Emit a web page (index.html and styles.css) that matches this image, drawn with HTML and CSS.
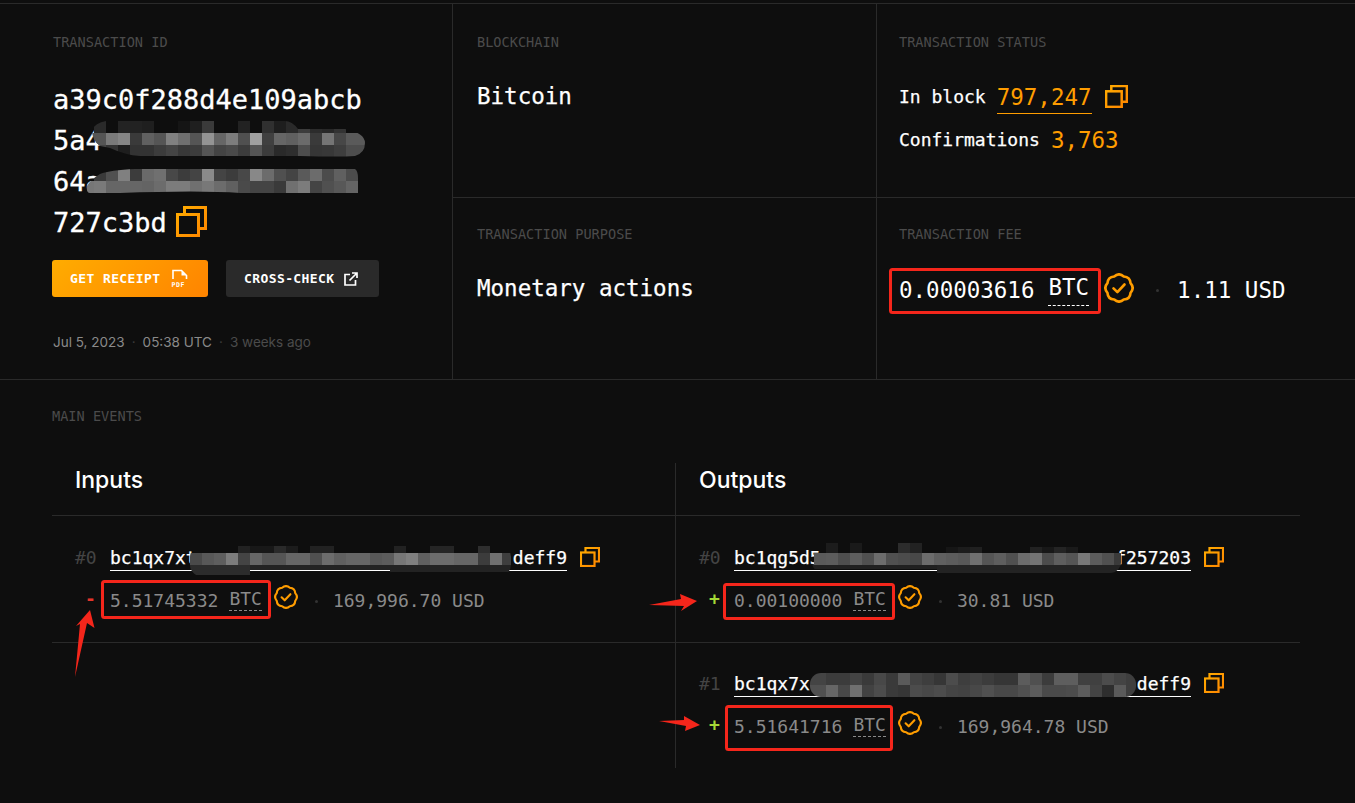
FILE: index.html
```html
<!DOCTYPE html>
<html lang="en">
<head>
<meta charset="utf-8">
<title>Transaction</title>
<link rel="stylesheet" href="styles.css">
</head>
<body>
<svg class="defs" width="0" height="0" aria-hidden="true">
  <defs>
    <linearGradient id="orange" x1="0" y1="0" x2="1" y2="1">
      <stop offset="0" stop-color="#ffa800"/>
      <stop offset="1" stop-color="#ff8a00"/>
    </linearGradient>
    <symbol id="copy" viewBox="0 0 31 31">
      <rect x="1.5" y="8.5" width="21" height="21" fill="none" stroke="url(#orange)"/>
      <path d="M8.5 8.5V1.5H29.5V22.5H22.5" fill="none" stroke="url(#orange)"/>
    </symbol>
    <symbol id="badge" viewBox="0 0 24 24">
      <path d="M8.17 2.76Q12 -0.6 15.83 2.76Q20.9 3.1 21.24 8.17Q24.6 12 21.24 15.83Q20.9 20.9 15.83 21.24Q12 24.6 8.17 21.24Q3.1 20.9 2.76 15.83Q-0.6 12 2.76 8.17Q3.1 3.1 8.17 2.76Z" fill="none" stroke="#ff9d00" stroke-width="2.1" stroke-linejoin="round"/>
      <path d="M7.6 12.3l3.1 3 5.7-6.100" fill="none" stroke="#ff9d00" stroke-width="2.1" stroke-linecap="round" stroke-linejoin="round"/>
    </symbol>
  </defs>
</svg>

<main class="page">
  <section class="summary">
    <div class="cell cell-id">
      <div class="label">TRANSACTION ID</div>
      <div class="hash">
        <div class="hash-line">a39c0f288d4e109abcb</div>
        <div class="hash-line">5a4</div>
        <div class="hash-line">64a</div>
        <div class="hash-line">727c3bd<svg class="icon-copy-lg"><use href="#copy"/></svg></div>
      </div>
      <div class="actions">
        <a class="btn btn-primary">GET RECEIPT
          <svg class="icon-pdf" viewBox="0 0 18 19">
            <path d="M2 10V1.5H10.5L15.5 6.5V10" fill="none" stroke="#fff" stroke-width="1.6"/>
            <path d="M10.5 2V6.5H15Z" fill="#fff"/>
            <text x="0.5" y="18" class="pdf-text">PDF</text>
          </svg>
        </a>
        <a class="btn btn-dark">CROSS-CHECK
          <svg class="icon-ext" viewBox="0 0 14 14">
            <path d="M6 2.500H1V13H11.500V8" fill="none" stroke="#fff" stroke-width="1.7"/>
            <path d="M8 1h5v5M13 1 5.500 8.500" fill="none" stroke="#fff" stroke-width="1.7"/>
          </svg>
        </a>
      </div>
      <div class="date">
        <span>Jul 5, 2023</span><i class="sep">·</i><span>05:38 UTC</span><i class="sep">·</i><span class="ago">3 weeks ago</span>
      </div>
    </div>

    <div class="cell cell-top cell-mid">
      <div class="label">BLOCKCHAIN</div>
      <div class="value">Bitcoin</div>
    </div>
    <div class="cell cell-top">
      <div class="label">TRANSACTION STATUS</div>
      <div class="status-row status-first">
        <span class="status-key">In block</span>
        <a class="status-num linked">797,247</a>
        <svg class="icon-copy-md"><use href="#copy"/></svg>
      </div>
      <div class="status-row status-second">
        <span class="status-key">Confirmations</span>
        <span class="status-num">3,763</span>
      </div>
    </div>
    <div class="cell cell-bottom cell-mid">
      <div class="label">TRANSACTION PURPOSE</div>
      <div class="value">Monetary actions</div>
    </div>
    <div class="cell cell-bottom">
      <div class="label">TRANSACTION FEE</div>
      <div class="fee">
        <span>0.00003616</span>
        <span class="unit">BTC</span>
        <svg class="icon-badge-lg"><use href="#badge"/></svg>
        <i class="dot dot-lg"></i>
        <span>1.11 USD</span>
      </div>
    </div>
  </section>

  <section class="events">
    <div class="label">MAIN EVENTS</div>
    <div class="events-grid">
      <div class="col-head">Inputs</div>
      <div class="col-head col-right">Outputs</div>

      <div class="io io-first">
        <div class="addr-row">
          <span class="index">#0</span>
          <a class="addr"><span>bc1qx7xt</span><span>deff9</span></a>
          <svg class="icon-copy-sm"><use href="#copy"/></svg>
        </div>
        <div class="amount-row">
          <span class="sign sign-minus">-</span>
          <span>5.51745332</span>
          <span class="unit-sm">BTC</span>
          <svg class="icon-badge-sm"><use href="#badge"/></svg>
          <i class="dot"></i>
          <span>169,996.70 USD</span>
        </div>
      </div>
      <div class="io io-first col-right">
        <div class="addr-row">
          <span class="index">#0</span>
          <a class="addr"><span>bc1qg5d5</span><span>f257203</span></a>
          <svg class="icon-copy-sm"><use href="#copy"/></svg>
        </div>
        <div class="amount-row">
          <span class="sign sign-plus">+</span>
          <span>0.00100000</span>
          <span class="unit-sm">BTC</span>
          <svg class="icon-badge-sm"><use href="#badge"/></svg>
          <i class="dot"></i>
          <span>30.81 USD</span>
        </div>
      </div>

      <div class="io io-last"></div>
      <div class="io io-last col-right">
        <div class="addr-row">
          <span class="index">#1</span>
          <a class="addr"><span>bc1qx7x</span><span>deff9</span></a>
          <svg class="icon-copy-sm"><use href="#copy"/></svg>
        </div>
        <div class="amount-row">
          <span class="sign sign-plus">+</span>
          <span>5.51641716</span>
          <span class="unit-sm">BTC</span>
          <svg class="icon-badge-sm"><use href="#badge"/></svg>
          <i class="dot"></i>
          <span>169,964.78 USD</span>
        </div>
      </div>
    </div>
  </section>

  <svg class="overlay" width="1355" height="803" viewBox="0 0 1355 803" aria-hidden="true">
    <defs>
      <clipPath id="b1"><path d="M92 130Q95 123 106 121H285Q292 121 298 129H345Q365 133 365 143Q365 153 355 156Q340 157 300 156H140Q125 155 110 148L100 146Q92 140 92 130Z"/></clipPath>
      <clipPath id="b2"><path d="M87 186Q90 180 100 174Q110 170 135 169H355Q358 171 358 178L361 193H240Q200 190 120 193H90Q86 193 87 186Z"/></clipPath>
      <clipPath id="b3"><rect x="190" y="546" width="321" height="30" rx="11"/></clipPath>
      <clipPath id="b4"><rect x="812" y="543" width="309" height="30" rx="11"/></clipPath>
      <clipPath id="b5"><rect x="810" y="673" width="326" height="24" rx="11"/></clipPath>
    </defs>

    <g clip-path="url(#b1)">
      <g class="mosaic" transform="translate(0 121)">
        <rect x="94" fill="#2a2a2a"/><rect x="118" fill="#232323"/><rect x="130" fill="#222"/><rect x="142" fill="#1f1f1f"/><rect x="178" fill="#151515"/><rect x="190" fill="#1f1f1f"/><rect x="202" fill="#3a3a3a"/><rect x="238" fill="#222"/><rect x="262" fill="#303030"/><rect x="274" fill="#1e1e1e"/><rect x="286" fill="#2a2a2a"/><rect x="298" fill="#3c3c3c"/><rect x="310" fill="#2c2c2c"/><rect x="322" fill="#282828"/><rect x="334" fill="#333"/>
      </g>
      <g class="mosaic" transform="translate(0 133)">
        <rect x="90" fill="#555"/><rect x="94" fill="#555"/><rect x="106" fill="#7a7a7a"/><rect x="118" fill="#858585"/><rect x="130" fill="#3a3a3a"/><rect x="142" fill="#606060"/><rect x="154" fill="#555"/><rect x="166" fill="#808080"/><rect x="178" fill="#6f6f6f"/><rect x="190" fill="#555"/><rect x="202" fill="#949494"/><rect x="214" fill="#666"/><rect x="226" fill="#7d7d7d"/><rect x="238" fill="#505050"/><rect x="250" fill="#a0a0a0"/><rect x="262" fill="#404040"/><rect x="274" fill="#666"/><rect x="286" fill="#606060"/><rect x="298" fill="#6b6b6b"/><rect x="310" fill="#3a3a3a"/><rect x="322" fill="#757575"/><rect x="334" fill="#474747"/><rect x="346" fill="#5a5a5a"/><rect x="358" fill="#5a5a5a"/>
      </g>
      <g class="mosaic" transform="translate(0 145)">
        <rect x="94" fill="#444"/><rect x="106" fill="#333"/><rect x="118" fill="#1e1e1e"/><rect x="130" fill="#333"/><rect x="142" fill="#333"/><rect x="154" fill="#3c3c3c"/><rect x="166" fill="#444"/><rect x="178" fill="#383838"/><rect x="190" fill="#3c3c3c"/><rect x="202" fill="#555"/><rect x="214" fill="#444"/><rect x="226" fill="#4a4a4a"/><rect x="238" fill="#3c3c3c"/><rect x="250" fill="#555"/><rect x="262" fill="#3c3c3c"/><rect x="274" fill="#2a2a2a"/><rect x="286" fill="#2e2e2e"/><rect x="298" fill="#4d4d4d"/><rect x="310" fill="#363636"/><rect x="322" fill="#383838"/><rect x="334" fill="#3e3e3e"/><rect x="346" fill="#4d4d4d"/><rect x="358" fill="#4d4d4d"/>
      </g>
    </g>

    <g clip-path="url(#b2)">
      <g class="mosaic" transform="translate(0 169)">
        <rect x="94" fill="#3a3a3a"/><rect x="106" fill="#505050"/><rect x="118" fill="#808080"/><rect x="130" fill="#3c3c3c"/><rect x="142" fill="#6a6a6a"/><rect x="154" fill="#707070"/><rect x="166" fill="#484848"/><rect x="178" fill="#3c3c3c"/><rect x="190" fill="#444"/><rect x="202" fill="#8a8a8a"/><rect x="214" fill="#444"/><rect x="226" fill="#3c3c3c"/><rect x="238" fill="#484848"/><rect x="250" fill="#888"/><rect x="262" fill="#6c6c6c"/><rect x="274" fill="#505050"/><rect x="286" fill="#444"/><rect x="298" fill="#5a5a5a"/><rect x="310" fill="#6c6c6c"/><rect x="322" fill="#4c4c4c"/><rect x="334" fill="#606060"/><rect x="346" fill="#4c4c4c"/>
      </g>
      <g class="mosaic" transform="translate(0 181)">
        <rect x="82" fill="#777"/><rect x="94" fill="#7a7a7a"/><rect x="106" fill="#666"/><rect x="118" fill="#666"/><rect x="130" fill="#666"/><rect x="142" fill="#646464"/><rect x="154" fill="#6c6c6c"/><rect x="166" fill="#7c7c7c"/><rect x="178" fill="#7c7c7c"/><rect x="190" fill="#707070"/><rect x="202" fill="#787878"/><rect x="214" fill="#6c6c6c"/><rect x="226" fill="#606060"/><rect x="238" fill="#4a4a4a"/><rect x="250" fill="#444"/><rect x="262" fill="#444"/><rect x="274" fill="#3a3a3a"/><rect x="286" fill="#707070"/><rect x="298" fill="#7c7c7c"/><rect x="310" fill="#444"/><rect x="322" fill="#505050"/><rect x="334" fill="#585858"/><rect x="346" fill="#646464"/>
      </g>
    </g>

    <g clip-path="url(#b3)">
      <g class="mosaic" transform="translate(0 546)">
        <rect x="238" fill="#222"/><rect x="250" fill="#181818"/><rect x="262" fill="#181818"/><rect x="274" fill="#2a2a2a"/><rect x="286" fill="#1c1c1c"/><rect x="310" fill="#222"/><rect x="322" fill="#222"/><rect x="394" fill="#222"/><rect x="430" fill="#252525"/><rect x="442" fill="#252525"/><rect x="478" fill="#2e2e2e"/>
      </g>
      <g class="mosaic" transform="translate(0 553)">
        <rect x="190" fill="#4a4a4a"/><rect x="202" fill="#585858"/><rect x="214" fill="#5e5e5e"/><rect x="226" fill="#7c7c7c"/><rect x="238" fill="#444"/><rect x="250" fill="#666"/><rect x="262" fill="#555"/><rect x="274" fill="#555"/><rect x="286" fill="#666"/><rect x="298" fill="#666"/><rect x="310" fill="#505050"/><rect x="322" fill="#6c6c6c"/><rect x="334" fill="#606060"/><rect x="346" fill="#666"/><rect x="358" fill="#666"/><rect x="370" fill="#585858"/><rect x="382" fill="#5c5c5c"/><rect x="394" fill="#777"/><rect x="406" fill="#808080"/><rect x="418" fill="#606060"/><rect x="430" fill="#6c6c6c"/><rect x="442" fill="#6c6c6c"/><rect x="454" fill="#666"/><rect x="466" fill="#666"/><rect x="478" fill="#3c3c3c"/><rect x="490" fill="#707070"/><rect x="502" fill="#3e3e3e"/>
      </g>
      <rect x="190" y="565" width="60" height="10" fill="#2c2c2c"/>
      <rect x="250" y="565" width="140" height="5" fill="#232323"/>
      <rect x="390" y="565" width="121" height="7" fill="#232323"/>
    </g>

    <g clip-path="url(#b4)">
      <g class="mosaic" transform="translate(0 543)">
        <rect x="826" fill="#1c1c1c"/><rect x="850" fill="#1a1a1a"/><rect x="898" fill="#2c2c2c"/><rect x="910" fill="#222"/>
      </g>
      <g class="mosaic" transform="translate(0 547)">
        <rect x="946" fill="#161616"/><rect x="958" fill="#1c1c1c"/><rect x="970" fill="#202020"/><rect x="1030" fill="#222"/><rect x="1042" fill="#181818"/><rect x="1054" fill="#242424"/><rect x="1066" fill="#1a1a1a"/>
      </g>
      <g class="mosaic" transform="translate(0 553)">
        <rect x="814" fill="#5a5a5a"/><rect x="826" fill="#5c5c5c"/><rect x="838" fill="#4e4e4e"/><rect x="850" fill="#5e5e5e"/><rect x="862" fill="#505050"/><rect x="874" fill="#6c6c6c"/><rect x="886" fill="#505050"/><rect x="898" fill="#4c4c4c"/><rect x="910" fill="#484848"/><rect x="922" fill="#6c6c6c"/><rect x="934" fill="#606060"/><rect x="946" fill="#5c5c5c"/><rect x="958" fill="#585858"/><rect x="970" fill="#707070"/><rect x="982" fill="#555"/><rect x="994" fill="#5e5e5e"/><rect x="1006" fill="#505050"/><rect x="1018" fill="#6c6c6c"/><rect x="1030" fill="#747474"/><rect x="1042" fill="#4c4c4c"/><rect x="1054" fill="#5e5e5e"/><rect x="1066" fill="#555"/><rect x="1078" fill="#787878"/><rect x="1090" fill="#5c5c5c"/><rect x="1102" fill="#505050"/><rect x="1114" fill="#3a3a3a"/>
      </g>
      <rect x="812" y="565" width="125" height="4" fill="#202020"/>
      <rect x="937" y="565" width="184" height="8" fill="#232323"/>
    </g>

    <g clip-path="url(#b5)">
      <g class="mosaic-wide" transform="translate(0 673)">
        <rect x="810" fill="#444"/><rect x="826" fill="#3c3c3c"/><rect x="838" fill="#3c3c3c"/><rect x="850" fill="#444"/><rect x="862" fill="#3a3a3a"/><rect x="874" fill="#484848"/><rect x="886" fill="#3a3a3a"/><rect x="898" fill="#5a5a5a"/><rect x="910" fill="#444"/><rect x="922" fill="#3e3e3e"/><rect x="934" fill="#363636"/><rect x="946" fill="#4c4c4c"/><rect x="958" fill="#3e3e3e"/><rect x="970" fill="#424242"/><rect x="982" fill="#3c3c3c"/><rect x="994" fill="#363636"/><rect x="1006" fill="#363636"/><rect x="1018" fill="#5c5c5c"/><rect x="1030" fill="#505050"/><rect x="1042" fill="#3c3c3c"/><rect x="1054" fill="#5e5e5e"/><rect x="1066" fill="#5e5e5e"/><rect x="1078" fill="#404040"/><rect x="1090" fill="#404040"/><rect x="1102" fill="#4c4c4c"/><rect x="1114" fill="#444"/><rect x="1126" fill="#3e3e3e"/>
      </g>
      <g class="mosaic-wide" transform="translate(0 685)">
        <rect x="810" fill="#505050"/><rect x="826" fill="#666"/><rect x="838" fill="#484848"/><rect x="850" fill="#707070"/><rect x="862" fill="#424242"/><rect x="874" fill="#4c4c4c"/><rect x="886" fill="#3a3a3a"/><rect x="898" fill="#363636"/><rect x="910" fill="#4c4c4c"/><rect x="922" fill="#484848"/><rect x="934" fill="#4c4c4c"/><rect x="946" fill="#444"/><rect x="958" fill="#424242"/><rect x="970" fill="#484848"/><rect x="982" fill="#505050"/><rect x="994" fill="#484848"/><rect x="1006" fill="#484848"/><rect x="1018" fill="#505050"/><rect x="1030" fill="#5c5c5c"/><rect x="1042" fill="#4a4a4a"/><rect x="1054" fill="#4a4a4a"/><rect x="1066" fill="#4c4c4c"/><rect x="1078" fill="#5c5c5c"/><rect x="1090" fill="#444"/><rect x="1102" fill="#2e2e2e"/><rect x="1114" fill="#5a5a5a"/><rect x="1126" fill="#3e3e3e"/>
      </g>
    </g>

    <g class="annot-box">
      <rect x="890.500" y="269.500" width="209" height="43" rx="2"/>
      <rect x="102.500" y="581.500" width="167" height="36" rx="2"/>
      <rect x="724.500" y="584.500" width="169" height="34" rx="2"/>
      <rect x="726.500" y="706.500" width="165" height="43" rx="2"/>
    </g>
    <g class="annot-arrow">
      <polygon points="90,610 94.500,628 87,623 75,677 80,624 76,626"/>
      <polygon points="649,605 681,599 680,594 697,601 681,611 684,606"/>
      <polygon points="659,721 684,720 684,716 700,725 685,731 686,726"/>
    </g>
  </svg>
</main>
</body>
</html>
```

FILE: styles.css
```css
* { box-sizing: border-box; }

html, body {
  margin: 0;
  height: 803px;
  overflow: hidden;
  background: #0e0e0e;
}

.defs { position: absolute; }

.page {
  position: relative;
  height: 803px;
  padding-top: 3px;
  color: #fff;
  font-family: "DejaVu Sans Mono", "Liberation Mono", monospace;
}

.overlay { position: absolute; left: 0; top: 0; pointer-events: none; }
.mosaic rect { width: 12px; height: 12px; }
.mosaic-wide rect { width: 16px; height: 12px; }
.mosaic-wide rect:not(:first-child) { width: 12px; }
.annot-box rect { fill: none; stroke: #f5261b; stroke-width: 3; }
.annot-arrow polygon { fill: #f5261b; }

.label {
  font-size: 13.600px;
  line-height: 16px;
  color: #4b4b4b;
}

/* Summary grid */
.summary {
  display: grid;
  grid-template-columns: 453px 424px 478px;
  grid-template-rows: 194px 181px;
  border-top: 1px solid #2a2a2a;
  border-bottom: 1px solid #2a2a2a;
}

.cell { padding-left: 22px; }
.cell-id {
  grid-row: 1 / 3;
  padding: 30px 0 0 52px;
  border-right: 1px solid #2a2a2a;
}
.cell-id .label, .hash, .date { margin-left: 1px; }
.cell-top { padding-top: 30px; border-bottom: 1px solid #2a2a2a; }
.cell-bottom { padding-top: 28px; }
.cell-mid { padding-left: 24px; border-right: 1px solid #2a2a2a; }

.hash { margin-top: 29px; -webkit-text-stroke: .3px #fff; }
.hash-line {
  display: flex;
  align-items: center;
  height: 41px;
  font-size: 27px;
  line-height: 41px;
}
.icon-copy-lg { width: 31px; height: 31px; margin-left: 9px; margin-top: -2px; stroke-width: 3; }

.actions { display: flex; gap: 18px; margin-top: 17px; }
.btn {
  display: flex;
  align-items: center;
  height: 37px;
  border-radius: 3px;
  font-size: 13px;
  font-weight: 700;
  letter-spacing: .4px;
  white-space: nowrap;
  color: #fff;
}
.btn-primary {
  width: 156px;
  padding-left: 18px;
  gap: 10px;
  background: linear-gradient(135deg, #ffac00, #ff8400);
}
.btn-dark {
  width: 153px;
  padding-left: 18px;
  gap: 9px;
  background: #2a2a2a;
}
.icon-pdf { width: 18px; height: 19px; flex: none; }
.pdf-text { font-size: 6.500px; font-weight: 700; fill: #fff; letter-spacing: .6px; }
.icon-ext { width: 14px; height: 14px; flex: none; }

.date {
  display: flex;
  align-items: center;
  margin-top: 35px;
  font-family: Inter, "Liberation Sans", sans-serif;
  font-size: 13.500px;
  line-height: 20px;
  color: #8a8a8a;
}
.sep { width: 18px; text-align: center; font-style: normal; color: #3a3a3a; }
.ago { color: #4b4b4b; }

.value {
  margin-top: 32px;
  font-size: 22.500px;
  line-height: 28px;
  -webkit-text-stroke: .25px #fff;
}

.status-row { display: flex; white-space: pre; }
.status-first { align-items: center; margin-top: 29px; height: 36px; }
.status-second { align-items: center; margin-top: 7px; height: 36px; }
.status-key { font-size: 18px; line-height: 24px; margin-right: 11px; -webkit-text-stroke: .25px #fff; }
.status-num { font-size: 22.500px; line-height: 28px; color: #ff9d00; }
.linked { border-bottom: 1px solid #ff9d00; height: 34px; padding-top: 3px; }
.icon-copy-md { width: 23px; height: 23px; margin-left: 13px; margin-top: -1px; stroke-width: 3.400; }

.fee {
  display: flex;
  align-items: flex-start;
  margin-top: 34px;
  font-size: 22.500px;
  line-height: 28px;
}
.unit {
  margin-left: 14px;
  line-height: 22px;
  padding-bottom: 7px;
  border-bottom: 1px dashed #fff;
}
.icon-badge-lg { width: 30px; height: 30px; margin: -3px 0 0 15px; }
.dot { flex: none; width: 3px; height: 3px; margin: 11px 15px 0 17px; border-radius: 50%; background: #333; }
.dot-lg { margin: 13px 18px 0 22px; }

/* Events */
.events { padding: 28px 55px 0 52px; }
.events-grid {
  display: grid;
  grid-template-columns: 623px 625px;
  grid-template-rows: 53px 127px 125px;
  margin-top: 39px;
}
.col-head {
  padding: 1px 0 0 23px;
  border-bottom: 1px solid #2a2a2a;
  font-family: Inter, "Liberation Sans", sans-serif;
  font-size: 23px;
  font-weight: 500;
  line-height: 32px;
}
.col-right { border-left: 1px solid #2a2a2a; }
.io { padding-left: 23px; font-size: 18px; }
.io-first { padding-top: 30px; border-bottom: 1px solid #2a2a2a; }
.io-last { padding-top: 29px; }

.addr-row { display: flex; align-items: flex-start; height: 25px; line-height: 24px; }
.index { width: 35px; color: #444; }
.addr {
  display: flex;
  justify-content: space-between;
  width: 457px;
  height: 25px;
  border-bottom: 1px solid #fff;
  color: #fff;
  -webkit-text-stroke: .25px #fff;
}
.icon-copy-sm { width: 20px; height: 20px; margin-left: 13px; margin-top: 1px; stroke-width: 3.400; }

.amount-row {
  display: flex;
  align-items: flex-start;
  margin-top: 18px;
  line-height: 24px;
  color: #8a8a8a;
}
.sign { width: 11px; margin: 0 14px 0 10px; font-weight: 700; line-height: 20px; }
.sign-minus { color: #e5352b; }
.sign-plus { color: #a5d936; }
.unit-sm {
  margin-left: 11px;
  line-height: 20px;
  padding-bottom: 1px;
  border-bottom: 1px dashed #8a8a8a;
}
.icon-badge-sm { width: 24px; height: 24px; margin: -4px 0 0 12px; }
```
